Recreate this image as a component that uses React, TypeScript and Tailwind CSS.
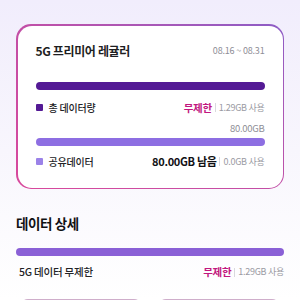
const font = { fontFamily: '"Noto Sans CJK KR", "Noto Sans", sans-serif' };

function Sep() {
  return <span className="mx-[3px] inline-block h-[9px] w-px bg-[#d9d9de]" />;
}

export default function App() {
  return (
    <div
      className="h-[300px] w-[300px] overflow-hidden bg-linear-to-b from-[#f1edfc] via-[#f8f6fd] to-white"
      style={font}
    >
      <div className="mx-4 mt-6 rounded-[15px] bg-linear-to-tr from-[#d9489c] via-[#c24ea6] to-[#8d5cc6] p-[1.5px]">
        <div className="rounded-[14px] bg-white px-[18px] pb-[18px] pt-[17px]">
          <div className="flex h-4 items-center justify-between">
            <span className="text-[12px] font-bold tracking-[-0.03em] text-[#1e1e22]">5G 프리미어 레귤러</span>
            <span className="text-[9px] tracking-[-0.02em] text-[#8e8e96]">08.16 ~ 08.31</span>
          </div>
          <div className="mt-[23px] h-2 rounded-full bg-[#541a95]" />
          <div className="mt-[10px] flex h-4 items-center justify-between">
            <div className="flex items-center">
              <span className="h-[7px] w-[7px] rounded-[1px] bg-[#541a95]" />
              <span className="ml-[6px] text-[10px] font-medium tracking-[-0.02em] text-[#222226]">총 데이터량</span>
            </div>
            <div className="flex items-center">
              <span className="text-[10.5px] font-bold tracking-[-0.03em] text-[#c2177f]">무제한</span>
              <Sep />
              <span className="text-[9px] tracking-[-0.03em] text-[#9a9aa2]">1.29GB 사용</span>
            </div>
          </div>
          <div className="mt-[6px] flex h-[14px] items-center justify-end">
            <span className="text-[9.5px] tracking-[-0.03em] text-[#8e8e96]">80.00GB</span>
          </div>
          <div className="mt-[2px] h-2 rounded-full bg-[#8d6ee2]" />
          <div className="mt-2 flex h-4 items-center justify-between">
            <div className="flex items-center">
              <span className="h-[7px] w-[7px] rounded-[1px] bg-[#9b82e8]" />
              <span className="ml-[6px] text-[10px] font-medium tracking-[-0.02em] text-[#222226]">공유데이터</span>
            </div>
            <div className="flex items-center">
              <span className="text-[11px] font-bold tracking-[-0.03em] text-[#111114]">80.00GB 남음</span>
              <Sep />
              <span className="text-[9px] tracking-[-0.03em] text-[#9a9aa2]">0.0GB 사용</span>
            </div>
          </div>
        </div>
      </div>

      <div className="px-4">
        <div className="mt-6 flex h-5 items-center">
          <span className="text-[13.5px] font-bold tracking-[-0.03em] text-[#111114]">데이터 상세</span>
        </div>
        <div className="mt-[15px] h-2 rounded-full bg-[#8a60d6]" />
        <div className="mt-2 flex h-4 items-center justify-between pl-[3px]">
          <span className="text-[10.5px] font-medium tracking-[-0.02em] text-[#222226]">5G 데이터 무제한</span>
          <div className="flex items-center">
            <span className="text-[10.5px] font-bold tracking-[-0.03em] text-[#c2177f]">무제한</span>
            <Sep />
            <span className="text-[9px] tracking-[-0.03em] text-[#9a9aa2]">1.29GB 사용</span>
          </div>
        </div>
        <div className="mt-[19px] grid grid-cols-2 gap-4 px-1">
          <div className="h-10 rounded-t-[8px] border-t border-[#cfaecb]" />
          <div className="h-10 rounded-t-[8px] border-t border-[#cfaecb]" />
        </div>
      </div>
    </div>
  );
}
